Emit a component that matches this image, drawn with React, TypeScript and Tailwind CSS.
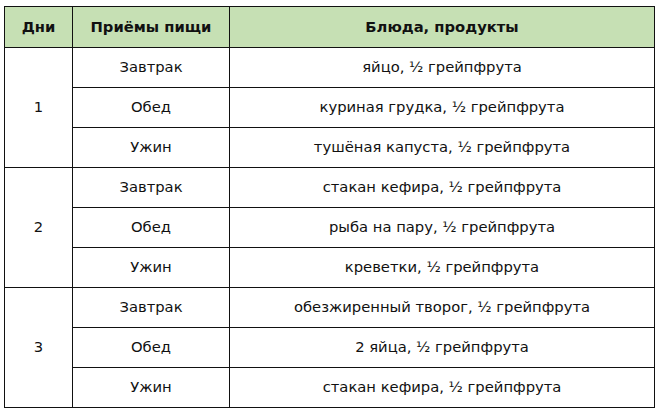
const days = [
  {
    day: '1',
    meals: [
      ['Завтрак', 'яйцо, ½ грейпфрута'],
      ['Обед', 'куриная грудка, ½ грейпфрута'],
      ['Ужин', 'тушёная капуста, ½ грейпфрута'],
    ],
  },
  {
    day: '2',
    meals: [
      ['Завтрак', 'стакан кефира, ½ грейпфрута'],
      ['Обед', 'рыба на пару, ½ грейпфрута'],
      ['Ужин', 'креветки, ½ грейпфрута'],
    ],
  },
  {
    day: '3',
    meals: [
      ['Завтрак', 'обезжиренный творог, ½ грейпфрута'],
      ['Обед', '2 яйца, ½ грейпфрута'],
      ['Ужин', 'стакан кефира, ½ грейпфрута'],
    ],
  },
];

export default function App() {
  return (
    <div className="bg-white w-[660px] h-[412px] pl-[4px] pt-[6px] font-['DejaVu_Sans',Verdana,sans-serif] text-[14.75px] text-[#111]">
      <table className="border-collapse table-fixed w-[651px]">
        <colgroup>
          <col className="w-[68px]" />
          <col className="w-[157px]" />
          <col />
        </colgroup>
        <thead>
          <tr className="h-[41px] bg-[#c6e0b4]">
            <th className="border border-[#111] font-bold">Дни</th>
            <th className="border border-[#111] font-bold">Приёмы пищи</th>
            <th className="border border-[#111] font-bold">Блюда, продукты</th>
          </tr>
        </thead>
        <tbody>
          {days.map((d) =>
            d.meals.map(([meal, food], i) => (
              <tr key={d.day + meal} className="h-[40px]">
                {i === 0 && (
                  <td rowSpan={3} className="border border-[#111] text-center">
                    {d.day}
                  </td>
                )}
                <td className="border border-[#111] text-center">{meal}</td>
                <td className="border border-[#111] text-center">{food}</td>
              </tr>
            ))
          )}
        </tbody>
      </table>
    </div>
  );
}
